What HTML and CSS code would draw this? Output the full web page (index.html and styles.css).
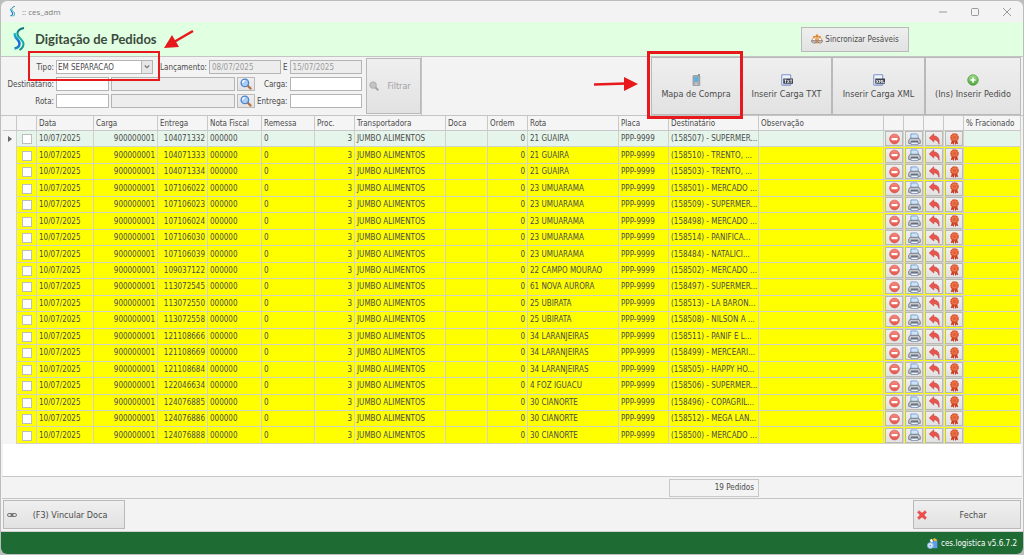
FILE: index.html
```html
<!DOCTYPE html>
<html lang="pt-BR">
<head>
  <meta charset="UTF-8">
  <title>Digitação de Pedidos</title>
  <meta name="viewport" content="width=device-width, initial-scale=1">
  <link rel="stylesheet" href="styles.css">
</head>
<body>
  <svg class="sprite" aria-hidden="true">
    <defs>
      <linearGradient id="gLogo" x1="0" y1="0" x2="0" y2="1">
        <stop offset="0" stop-color="#0d6f80"/>
        <stop offset="0.5" stop-color="#16b8a8"/>
        <stop offset="1" stop-color="#0d8f8c"/>
      </linearGradient>
      <linearGradient id="gLogo2" x1="0" y1="0" x2="0" y2="1">
        <stop offset="0" stop-color="#1fc6c0"/>
        <stop offset="0.6" stop-color="#1c5fe0"/>
        <stop offset="1" stop-color="#1d8fc0"/>
      </linearGradient>
      <linearGradient id="gRed" x1="0" y1="0" x2="0" y2="1">
        <stop offset="0" stop-color="#f58a80"/>
        <stop offset="1" stop-color="#e2554b"/>
      </linearGradient>
      <linearGradient id="gGreen" x1="0" y1="0" x2="0" y2="1">
        <stop offset="0" stop-color="#a4dc8c"/>
        <stop offset="1" stop-color="#4fa63c"/>
      </linearGradient>
    </defs>
    <symbol id="logo" viewBox="0 0 26 48">
      <path d="M23 2C13 4 9 8 10 15c1 7 12 10 12 19 0 5-3 9-8 12" fill="none" stroke="url(#gLogo)" stroke-width="4"/>
      <path d="M5 12c-3 10 9 13 9 21 0 5-4 9-10 10" fill="none" stroke="url(#gLogo2)" stroke-width="5"/>
    </symbol>
    <symbol id="lens" viewBox="0 0 16 16">
      <path d="M10 10l4 4" stroke="#b8703a" stroke-width="3" stroke-linecap="round"/>
      <circle cx="6.500" cy="6.500" r="5" fill="#a9cdf2" stroke="#4f83cc" stroke-width="1.800"/>
      <path d="M3.500 6.500a3 3 0 0 1 3-3" fill="none" stroke="#fff" stroke-width="1.500"/>
    </symbol>
    <symbol id="lens-off" viewBox="0 0 16 16">
      <path d="M10 10l4 4" stroke="#a2a2a2" stroke-width="3" stroke-linecap="round"/>
      <circle cx="6.500" cy="6.500" r="5" fill="#c4c4c4" stroke="#b0b0b0" stroke-width="1.800"/>
    </symbol>
    <symbol id="scale" viewBox="0 0 20 16">
      <path d="M10 1v11M4 4h12M6 14h8M10 1L8 4h4z" stroke="#e08a2c" stroke-width="2" fill="none"/>
      <path d="M5 4L1 11h8zM15 4l-4 7h8z" fill="#fff" stroke="#cf6f23" stroke-width="1.200"/>
      <path d="M1 11h8c0 5-8 5-8 0zM11 11h8c0 5-8 5-8 0z" fill="#c8d3e4" stroke="#6b5548"/>
    </symbol>
    <symbol id="phone" viewBox="0 0 16 16">
      <path d="M11 0h2v5h-2z" fill="#777"/>
      <rect x="4" y="2" width="9" height="14" rx="1" fill="#a4a9ad" stroke="#8d9397"/>
      <rect x="6" y="4" width="5" height="6" fill="#53b5e6"/>
      <path d="M6 12h5M6 14h5" stroke="#dfe3e6" stroke-dasharray="1.500 0.700"/>
    </symbol>
    <symbol id="file-bar" viewBox="0 0 16 16">
      <rect x="1" y="1" width="12" height="14" rx="1" fill="#eef3fc" stroke="#7e93c8" stroke-width="1.400"/>
      <path d="M3 14h9" stroke="#a9bbe4" stroke-width="1.500"/>
      <rect x="3" y="6" width="13" height="7" fill="#3c4250"/>
    </symbol>
    <symbol id="file-txt" viewBox="0 0 16 16">
      <use href="#file-bar"/>
      <path d="M4.500 8h3M6 8v4M8.500 8l2.500 4M11 8l-2.500 4M12 8h3M13.500 8v4" stroke="#fff" fill="none"/>
    </symbol>
    <symbol id="file-xml" viewBox="0 0 16 16">
      <use href="#file-bar"/>
      <path d="M4.500 8l2.500 4M7 8l-2.500 4M8.500 12V8l1.500 2 1.500-2v4M13 8v3.500h2.500" stroke="#fff" fill="none"/>
    </symbol>
    <symbol id="plus" viewBox="0 0 16 16">
      <circle cx="8" cy="8" r="7" fill="url(#gGreen)" stroke="#4b9a3b"/>
      <path d="M8 4.500v7M4.500 8h7" stroke="#fff" stroke-width="2.200"/>
    </symbol>
    <symbol id="minus" viewBox="0 0 16 16">
      <circle cx="8" cy="8" r="6.500" fill="url(#gRed)" stroke="#dc5a50"/>
      <rect x="4" y="6.500" width="8" height="3" rx="0.500" fill="#fff"/>
    </symbol>
    <symbol id="printer" viewBox="0 0 18 16">
      <path d="M4 8V1h8l2 2v5z" fill="#cfe4fb" stroke="#5b86c0"/>
      <path d="M3 7h12l2 3v4H1v-4z" fill="#c6c9cf" stroke="#5c6068"/>
      <path d="M4 11h10" stroke="#4a4e56" stroke-width="1.500"/>
      <path d="M4 12.500h10v3H4z" fill="#f7faff" stroke="#62779a"/>
    </symbol>
    <symbol id="undo" viewBox="0 0 16 16">
      <path d="M7 1v3c5 0 8 3 7 11-1-4-3-6-7-6v3L1 6.500z" fill="#e8574f" stroke="#cb3c38" stroke-width="0.800"/>
    </symbol>
    <symbol id="medal" viewBox="0 0 16 16">
      <path d="M5 8l-2 7 2.500-1 1.500 2 1-5 1 5 1.500-2 2.500 1-2-7z" fill="#c93c22"/>
      <circle cx="8" cy="6" r="4.800" fill="#ee7648" stroke="#d9502c" stroke-width="2" stroke-dasharray="2.200 0.500"/>
      <circle cx="8" cy="6" r="2.300" fill="#e0603a"/>
    </symbol>
    <symbol id="chain" viewBox="0 0 20 10">
      <rect x="1" y="2" width="10" height="6" rx="3" fill="none" stroke="#777" stroke-width="2"/>
      <rect x="9" y="2" width="10" height="6" rx="3" fill="none" stroke="#777" stroke-width="2"/>
      <path d="M6 5h8" stroke="#555" stroke-width="1.500"/>
    </symbol>
    <symbol id="cross" viewBox="0 0 16 16">
      <path d="M3 1l5 4 5-4 2 3-4 4 4 4-2 3-5-4-5 4-2-3 4-4-4-4z" fill="#ef4b4b" stroke="#e25050"/>
    </symbol>
    <symbol id="app" viewBox="0 0 16 16">
      <path d="M8 2l3-2 4 3-2 3z" fill="#f0b73a"/>
      <path d="M7 5l8-1v11H9z" fill="#5f9be8"/>
      <path d="M4 3l3-2 2 4-3 2z" fill="#fff"/>
      <circle cx="5" cy="11" r="4" fill="#eaf3ff" stroke="#8fb9ef" stroke-width="1.500"/>
      <circle cx="5" cy="11" r="1.300" fill="#4d86d8"/>
    </symbol>
  </svg>

  <div class="window">
    <div class="titlebar">
      <svg class="titlebar-logo"><use href="#logo"/></svg>
      <span class="titlebar-text">:: ces_adm</span>
      <div class="window-buttons">
        <button aria-label="Minimizar"><svg viewBox="0 0 8 8"><path d="M0 4h8"/></svg></button>
        <button aria-label="Maximizar"><svg viewBox="0 0 8 8"><rect x="0.500" y="0.500" width="7" height="7" rx="1"/></svg></button>
        <button aria-label="Fechar janela"><svg viewBox="0 0 8 8"><path d="M0 0l8 8M8 0L0 8"/></svg></button>
      </div>
    </div>

    <header class="header">
      <svg class="header-logo"><use href="#logo"/></svg>
      <h1>Digitação de Pedidos</h1>
      <button class="btn btn-sync"><svg><use href="#scale"/></svg>Sincronizar Pesáveis</button>
    </header>

    <div class="toolbar">
      <form class="filters">
        <div class="filter-rows">
          <div class="filter-row">
            <label class="label-left" for="tipo">Tipo:</label>
            <span class="select-box">
              <select id="tipo"><option>EM SEPARACAO</option></select>
              <svg viewBox="0 0 8 8"><path d="M1 2l3 3 3-3"/></svg>
            </span>
            <label class="label-right" for="dataIni">Lançamento:</label>
            <input class="date" type="text" id="dataIni" value="08/07/2025" disabled>
            <label for="dataFim">E</label>
            <input class="date" type="text" id="dataFim" value="15/07/2025" disabled>
          </div>
          <div class="filter-row">
            <label class="label-left" for="dest">Destinatário:</label>
            <input class="code" type="text" id="dest">
            <input class="name" type="text" aria-label="Nome do destinatário" disabled>
            <button class="btn btn-lens" type="button" aria-label="Buscar destinatário"><svg><use href="#lens"/></svg></button>
            <label class="label-right" for="carga">Carga:</label>
            <input class="date" type="text" id="carga">
          </div>
          <div class="filter-row">
            <label class="label-left" for="rota">Rota:</label>
            <input class="code" type="text" id="rota">
            <input class="name" type="text" aria-label="Nome da rota" disabled>
            <button class="btn btn-lens" type="button" aria-label="Buscar rota"><svg><use href="#lens"/></svg></button>
            <label class="label-right" for="entrega">Entrega:</label>
            <input class="date" type="text" id="entrega">
          </div>
        </div>
        <button class="btn btn-filter" type="submit" disabled><svg><use href="#lens-off"/></svg>Filtrar</button>
      </form>
      <div class="actions">
        <button class="btn btn-action"><svg><use href="#phone"/></svg>Mapa de Compra</button>
        <button class="btn btn-action"><svg><use href="#file-txt"/></svg>Inserir Carga TXT</button>
        <button class="btn btn-action"><svg><use href="#file-xml"/></svg>Inserir Carga XML</button>
        <button class="btn btn-action"><svg><use href="#plus"/></svg>(Ins) Inserir Pedido</button>
        <div class="mark mark-mapa"></div>
        <svg class="arrow arrow-mapa" viewBox="0 0 44 14">
          <path d="M0 7.500l32-1" stroke="#e8191c" stroke-width="2.500"/>
          <path d="M30 0l14 7-14 7z" fill="#e8191c"/>
        </svg>
      </div>
      <div class="mark mark-tipo"></div>
      <svg class="arrow arrow-tipo" viewBox="0 0 30 19">
        <path d="M29 1L10 12" stroke="#e8191c" stroke-width="2.500"/>
        <path d="M0 18L8 5l7 12z" fill="#e8191c"/>
      </svg>
    </div>

    <main class="grid">
      <table>
        <colgroup>
          <col class="w14"><col class="w20"><col class="w57"><col class="w64"><col class="w50">
          <col class="w54"><col class="w53"><col class="w40"><col class="w91"><col class="w42">
          <col class="w40"><col class="w91"><col class="w50"><col class="w90"><col>
          <col class="w20"><col class="w20"><col class="w20"><col class="w20"><col class="w57">
        </colgroup>
        <thead>
          <tr>
            <th></th><th></th><th>Data</th><th>Carga</th><th>Entrega</th><th>Nota Fiscal</th>
            <th>Remessa</th><th>Proc.</th><th>Transportadora</th><th>Doca</th><th>Ordem</th>
            <th>Rota</th><th>Placa</th><th>Destinatário</th><th>Observação</th>
            <th></th><th></th><th></th><th></th><th>% Fracionado</th>
          </tr>
        </thead>
        <tbody id="pedidos"></tbody>
      </table>
    </main>

    <div class="summary"><output>19 Pedidos</output></div>

    <div class="bottom">
      <button class="btn btn-bottom btn-doca"><svg><use href="#chain"/></svg><span>(F3) Vincular Doca</span></button>
      <button class="btn btn-bottom btn-fechar"><svg><use href="#cross"/></svg><span>Fechar</span></button>
    </div>

    <footer class="status"><svg><use href="#app"/></svg>ces.logistica v5.6.7.2</footer>
  </div>

  <script>
    // entrega, rota, destinatário
    const pedidos = [
      ['104071332', '21 GUAIRA', '(158507) - SUPERMER...'],
      ['104071333', '21 GUAIRA', '(158510) - TRENTO, ...'],
      ['104071334', '21 GUAIRA', '(158503) - TRENTO, ...'],
      ['107106022', '23 UMUARAMA', '(158501) - MERCADO ...'],
      ['107106023', '23 UMUARAMA', '(158509) - SUPERMER...'],
      ['107106024', '23 UMUARAMA', '(158498) - MERCADO ...'],
      ['107106030', '23 UMUARAMA', '(158514) - PANIFICA...'],
      ['107106039', '23 UMUARAMA', '(158484) - NATALICI...'],
      ['109037122', '22 CAMPO MOURAO', '(158502) - MERCADO ...'],
      ['113072545', '61 NOVA AURORA', '(158497) - SUPERMER...'],
      ['113072550', '25 UBIRATA', '(158513) - LA BARON...'],
      ['113072558', '25 UBIRATA', '(158508) - NILSON A ...'],
      ['121108666', '34 LARANJEIRAS', '(158511) - PANIF E L...'],
      ['121108669', '34 LARANJEIRAS', '(158499) - MERCEARI...'],
      ['121108684', '34 LARANJEIRAS', '(158505) - HAPPY HO...'],
      ['122046634', '4 FOZ IGUACU', '(158506) - SUPERMER...'],
      ['124076885', '30 CIANORTE', '(158496) - COPAGRIL...'],
      ['124076886', '30 CIANORTE', '(158512) - MEGA LAN...'],
      ['124076888', '30 CIANORTE', '(158500) - MERCADO ...']
    ];
    const acoes = [['minus', 'Excluir'], ['printer', 'Imprimir'], ['undo', 'Estornar'], ['medal', 'Certificar']];

    const botoes = acoes.map(([icone, nome]) =>
      `<td class="act"><button class="btn" aria-label="${nome}"><svg><use href="#${icone}"/></svg></button></td>`).join('');

    document.getElementById('pedidos').innerHTML = pedidos.map(([entrega, rota, dest], i) => `
      <tr${i === 0 ? ' class="current"' : ''}>
        <td class="indicator">${i === 0 ? '<svg viewBox="0 0 4 6"><path d="M0 0l4 3-4 3z"/></svg>' : ''}</td>
        <td class="check"><input type="checkbox" aria-label="Selecionar ${entrega}"></td>
        <td>10/07/2025</td>
        <td class="num">900000001</td>
        <td class="num">${entrega}</td>
        <td>000000</td>
        <td>0</td>
        <td class="num">3</td>
        <td>JUMBO ALIMENTOS</td>
        <td></td>
        <td class="num">0</td>
        <td>${rota}</td>
        <td>PPP-9999</td>
        <td>${dest}</td>
        <td></td>
        ${botoes}
        <td></td>
      </tr>`).join('');
  </script>
</body>
</html>
```

FILE: styles.css
```css
* {
  box-sizing: border-box;
}
body {
  margin: 0;
  height: 100vh;
  padding: 1px;
  background-color: #bdbdbd;
  font-family: "DejaVu Sans Condensed", Tahoma, "DejaVu Sans", sans-serif;
  font-size: 8px;
  color: #4a4a4a;
}
.sprite {
  position: absolute;
  width: 0;
  height: 0;
}
button, input, select {
  font-family: inherit;
  font-size: inherit;
  color: inherit;
  margin: 0;
}
.window {
  display: flex;
  flex-direction: column;
  height: 100%;
  border-radius: 6px;
  background-color: #f3f3f3;
  overflow: hidden;
}

/* barra de título */
.titlebar {
  display: flex;
  align-items: center;
  flex: 0 0 21px;
  padding: 0 12px 0 8px;
  color: #7c7c7c;
}
.titlebar-logo {
  width: 7px;
  height: 11px;
  margin-right: 6px;
}
.titlebar-text {
  font-family: "Open Sans", sans-serif;
  font-size: 8px;
}
.window-buttons {
  display: flex;
  gap: 24px;
  margin-left: auto;
}
.window-buttons button {
  display: flex;
  padding: 0;
  border: 0;
  background: none;
}
.window-buttons svg {
  width: 8px;
  height: 8px;
  overflow: visible;
  fill: none;
  stroke: #999;
}

.header {
  display: flex;
  align-items: center;
  flex: 0 0 34px;
  padding: 0 114px 0 11px;
  background-color: #e1ffe1;
}
.header-logo {
  width: 14px;
  height: 24px;
  margin-right: 9px;
}
.header h1 {
  margin: 0;
  font-family: Lato, "Open Sans", sans-serif;
  font-size: 13px;
  font-weight: bold;
  color: #3c4a3e;
}
.btn {
  display: flex;
  align-items: center;
  justify-content: center;
  padding: 0;
  border: 1px solid #b9b9b9;
  border-radius: 0;
  background: linear-gradient(#efefef, #e2e2e2);
}
.btn-sync {
  width: 108px;
  height: 25px;
  margin-left: auto;
  gap: 2px;
}
.btn-sync svg {
  width: 12px;
  height: 10px;
}

/* filtros e ações */
.toolbar {
  position: relative;
  display: flex;
  justify-content: space-between;
  flex: 0 0 60px;
  padding: 0 2px;
  border-top: 1px solid #c4c4c4;
  border-bottom: 1px solid #c4c4c4;
}
.filters {
  display: flex;
  padding: 1px 0 1px 1px;
  gap: 4px;
  border-right: 1px solid #c4c4c4;
}
.filter-rows {
  display: flex;
  flex-direction: column;
  gap: 3px;
  padding-top: 2px;
}
.filter-row {
  display: flex;
  align-items: center;
  gap: 2px;
  height: 14px;
}
.label-left {
  width: 50px;
  text-align: right;
}
.label-right {
  flex: 1;
  text-align: right;
}
.filter-row input, .filter-row select {
  height: 14px;
  padding: 0 2px;
  border: 1px solid #b4b4b4;
  border-radius: 0;
  background-color: #fff;
}
.filter-row input:disabled {
  background-color: #ededed;
  color: #9b9b9b;
}
.filter-row .date {
  width: 72px;
}
.filter-row .code {
  width: 53px;
}
.filter-row .name {
  width: 124px;
}
.select-box {
  position: relative;
  display: flex;
  width: 97px;
}
.select-box select {
  width: 100%;
  padding: 0 1px;
  appearance: none;
}
.select-box svg {
  position: absolute;
  top: 1px;
  right: 1px;
  width: 11px;
  height: 12px;
  padding: 2px;
  border-left: 1px solid #b4b4b4;
  background-color: #e6e6e6;
  fill: none;
  stroke: #777;
  stroke-width: 1.500;
  pointer-events: none;
}
.btn-lens {
  width: 18px;
  height: 14px;
}
.btn-lens svg {
  width: 12px;
  height: 12px;
}
.btn-filter {
  width: 55px;
  gap: 8px;
  padding-right: 6px;
  font-size: 9px;
}
.btn-filter:disabled {
  color: #a2a2a2;
}
.btn-filter svg {
  width: 10px;
  height: 10px;
}
.actions {
  position: relative;
  display: flex;
}
.btn-action {
  flex-direction: column;
  gap: 3px;
  width: 93px;
  font-size: 9px;
}
.btn-action:nth-child(1) {
  width: 90px;
}
.btn-action:nth-child(2) {
  width: 91px;
}
.btn-action:nth-child(4) {
  width: 96px;
}
.btn-action svg {
  width: 12px;
  height: 12px;
}

/* destaques em vermelho */
.mark {
  position: absolute;
  border: 3px solid #e8191c;
  pointer-events: none;
}
.mark-tipo {
  top: -6px;
  left: 27px;
  width: 132px;
  height: 30px;
  border-width: 2px;
}
.mark-mapa {
  top: -6px;
  left: -4px;
  width: 96px;
  height: 68px;
  z-index: 2;
}
.arrow {
  position: absolute;
  pointer-events: none;
}
.arrow-tipo {
  top: -27px;
  left: 163px;
  width: 30px;
  height: 19px;
}
.arrow-mapa {
  top: 20px;
  left: -57px;
  width: 44px;
  height: 14px;
}

.grid {
  flex: 1 1 0;
  min-height: 0;
  margin: 0 2px;
  padding-bottom: 32px;
  background-color: #fff;
}
table {
  width: 100%;
  height: 100%;
  table-layout: fixed;
  border-collapse: separate;
  border-spacing: 0;
}
th, td {
  padding: 1px 2px 0 2px;
  border-right: 1px solid #d2d2c6;
  border-bottom: 1px solid #d2d2c6;
  line-height: 10px;
  white-space: nowrap;
  overflow: hidden;
}
th {
  height: 15px;
  background-color: #f5f5f5;
  border-color: #c8c8c8;
  font-weight: normal;
  text-align: left;
}
tbody td {
  background-color: #ff0;
}
tbody .current td {
  background-color: #e6f5eb;
}
tbody td.indicator, tbody .current td.indicator {
  padding: 0 2px 0 5px;
  background-color: #f5f5f5;
  border-bottom: 0;
}
.indicator svg {
  display: block;
  width: 4px;
  height: 6px;
  fill: #666;
}
.num {
  text-align: right;
}
.check input {
  display: block;
  width: 10px;
  height: 10px;
  margin: 0 auto;
  appearance: none;
  border: 1px solid #bdbdbd;
  background-color: #fff;
}
td.act {
  padding: 0 0 0 1px;
}
.act .btn {
  width: 100%;
  height: 15px;
}
.act svg {
  width: 13px;
  height: 12px;
}
.w14 { width: 14px; }
.w20 { width: 20px; }
.w40 { width: 40px; }
.w42 { width: 42px; }
.w50 { width: 50px; }
.w53 { width: 53px; }
.w54 { width: 54px; }
.w57 { width: 57px; }
.w64 { width: 64px; }
.w90 { width: 90px; }
.w91 { width: 91px; }

/* rodapé */
.summary {
  display: flex;
  justify-content: flex-end;
  align-items: center;
  flex: 0 0 23px;
  margin: 0 1px;
  padding-right: 263px;
  border-top: 1px solid #c8c8c8;
  border-bottom: 1px solid #c4c4c4;
}
.summary output {
  width: 90px;
  padding: 3px 4px;
  border: 1px solid #c8c8c8;
  line-height: 10px;
  text-align: right;
}
.bottom {
  display: flex;
  justify-content: space-between;
  flex: 0 0 33px;
  padding: 1px 2px 2px;
  border-bottom: 1px solid #d0d0d0;
}
.btn-bottom {
  padding: 0 1px 0 3px;
  font-size: 9px;
}
.btn-bottom span {
  flex: 1;
}
.btn-doca {
  width: 122px;
}
.btn-doca svg {
  width: 10px;
  height: 6px;
}
.btn-fechar {
  width: 108px;
}
.btn-fechar svg {
  width: 10px;
  height: 10px;
}
.status {
  display: flex;
  align-items: center;
  justify-content: flex-end;
  gap: 3px;
  flex: 0 0 22px;
  padding-right: 6px;
  background-color: #1e6b34;
  color: #fff;
}
.status svg {
  width: 11px;
  height: 11px;
}
```
